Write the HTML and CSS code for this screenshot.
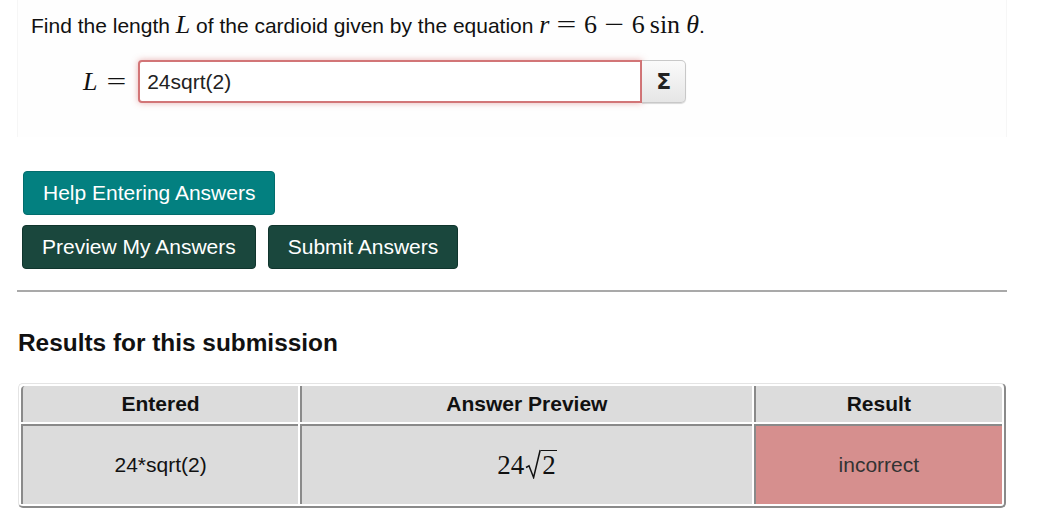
FILE: index.html
```html
<!DOCTYPE html>
<html>
<head>
<meta charset="utf-8">
<link rel="stylesheet" href="styles.css">
</head>
<body>
<div class="page">
  <div class="problem">
    <p class="statement">Find the length <span class="mi">L</span> of the cardioid given by the equation <span class="math"><span class="mi">r</span><span class="mo">=</span>6<span class="mo">−</span>6<span class="fn">sin</span><span class="mi">θ</span></span>.</p>
    <div class="answer-row">
      <span class="math label"><span class="mi">L</span><span class="mo">=</span></span>
      <div class="answer-group">
        <input class="answer-input" type="text" value="24sqrt(2)">
        <button class="eq-btn" type="button">Σ</button>
      </div>
    </div>
  </div>

  <div class="buttons">
    <div class="btn-row"><button class="btn btn-help" type="button">Help Entering Answers</button></div>
    <div class="btn-row">
      <button class="btn btn-dark" type="button">Preview My Answers</button>
      <button class="btn btn-dark" type="button">Submit Answers</button>
    </div>
  </div>

  <hr class="divider">

  <h2 class="results-title">Results for this submission</h2>

  <table class="results">
    <colgroup>
      <col class="c1"><col class="c2"><col class="c3">
    </colgroup>
    <thead>
      <tr><th>Entered</th><th>Answer Preview</th><th>Result</th></tr>
    </thead>
    <tbody>
      <tr>
        <td>24*sqrt(2)</td>
        <td><span class="math preview">24<span class="sqrt"><svg class="rad" width="16" height="30" viewBox="0 0 16 30"><path d="M1 18.5 L4 16.8 L8.6 28.5 L15.2 1" fill="none" stroke="#111" stroke-width="1.5" stroke-linejoin="miter"/></svg><span class="radicand">2</span></span></span></td>
        <td class="incorrect">incorrect</td>
      </tr>
    </tbody>
  </table>
</div>
</body>
</html>
```

FILE: styles.css
```css
* { box-sizing: border-box; }

html, body {
  margin: 0;
  padding: 0;
  background: #fff;
}

body {
  font-family: "Liberation Sans", Arial, sans-serif;
  font-size: 21px;
  color: #111;
}

.page {
  width: 990px;
  margin-left: 17px;
}

.problem {
  background: #fefefe;
  border-left: 1px solid #f6f6f6;
  border-right: 1px solid #f6f6f6;
  padding: 11px 12px 34px 13px;
}

.statement {
  margin: 0;
  line-height: 27px;
}

.math {
  font-family: "Liberation Serif", "Times New Roman", serif;
  font-size: 26px;
}

.mi {
  font-family: "Liberation Serif", "Times New Roman", serif;
  font-style: italic;
  font-size: 26px;
}

.mo {
  display: inline-block;
  transform: scaleX(1.35);
  margin: 0 10px;
}

.fn {
  margin-left: 5px;
  margin-right: 6px;
}

.answer-row {
  display: flex;
  align-items: center;
  margin-top: 21px;
  padding-left: 52px;
}

.label {
  margin-right: 12px;
}

.label .mo {
  margin-right: 2px;
  margin-left: 12px;
}

.answer-group {
  display: flex;
  height: 43px;
}

.answer-input {
  width: 504px;
  height: 43px;
  border: 2px solid #d27577;
  border-radius: 4px 0 0 4px;
  box-shadow: 0 0 6px rgba(210, 100, 100, 0.5);
  font-family: "Liberation Sans", Arial, sans-serif;
  font-size: 21px;
  color: #222;
  padding: 0 7px;
  outline: none;
}

.eq-btn {
  width: 44px;
  height: 43px;
  border: 1px solid #c8c8c8;
  border-left: none;
  border-radius: 0 5px 5px 0;
  background: linear-gradient(#fafafa, #e6e6e6);
  box-shadow: 0 1px 1px rgba(0,0,0,0.15);
  font-family: "DejaVu Sans", sans-serif;
  font-weight: bold;
  font-size: 22px;
  color: #222;
  padding: 0;
}

.buttons {
  display: flex;
  flex-direction: column;
  gap: 10px;
  margin-top: 34px;
  padding-left: 5px;
}

.btn-row {
  display: flex;
  gap: 12px;
}

.btn {
  font-family: "Liberation Sans", Arial, sans-serif;
  font-size: 21px;
  color: #fff;
  height: 44px;
  padding: 0 19px;
  border-radius: 4px;
  cursor: pointer;
}

.btn-help {
  background: #038080;
  border: 1px solid #026d6d;
  margin-left: 1px;
}

.btn-dark {
  background: #1a473d;
  border: 1px solid #10352d;
}

.divider {
  margin: 21px 0 0 0;
  border: none;
  border-top: 2px solid #a9a9a9;
  height: 0;
}

.results-title {
  margin: 37px 0 0 1px;
  font-size: 24.4px;
  font-weight: bold;
  line-height: 28px;
}

.results {
  margin-top: 26px;
  margin-left: 1px;
  width: 988px;
  border-collapse: separate;
  border-spacing: 2px;
  border-top: 1px solid #e4e4e4;
  border-left: 1px solid #e4e4e4;
  border-right: 2px solid #8a8a8a;
  border-bottom: 2px solid #8a8a8a;
  border-radius: 5px;
  font-size: 21px;
}

.results col.c1 { width: 279px; }
.results col.c2 { width: 455px; }
.results col.c3 { width: 250px; }

.results th,
.results td {
  background: #dcdcdc;
  text-align: center;
  border-left: 2px solid #8a8a8a;
}

.results th {
  height: 36px;
  font-weight: bold;
  padding: 0;
  color: #111;
}

.results th:first-child { border-top-left-radius: 4px; }
.results th:last-child { border-top-right-radius: 4px; }

.results td {
  height: 80px;
  border-top: 2px solid #8a8a8a;
  padding: 0;
  color: #111;
}

.results td.incorrect {
  background: #d68f8e;
  color: #333;
}

.preview {
  font-size: 27px;
  display: inline-flex;
  align-items: flex-end;
  line-height: 28px;
}

.sqrt {
  display: inline-flex;
  align-items: flex-start;
  margin-left: 1px;
}

.rad {
  display: block;
  margin-top: -2px;
}

.radicand {
  border-top: 1.5px solid #111;
  padding: 0 1px;
  margin-top: -1px;
  line-height: 28px;
}
```
